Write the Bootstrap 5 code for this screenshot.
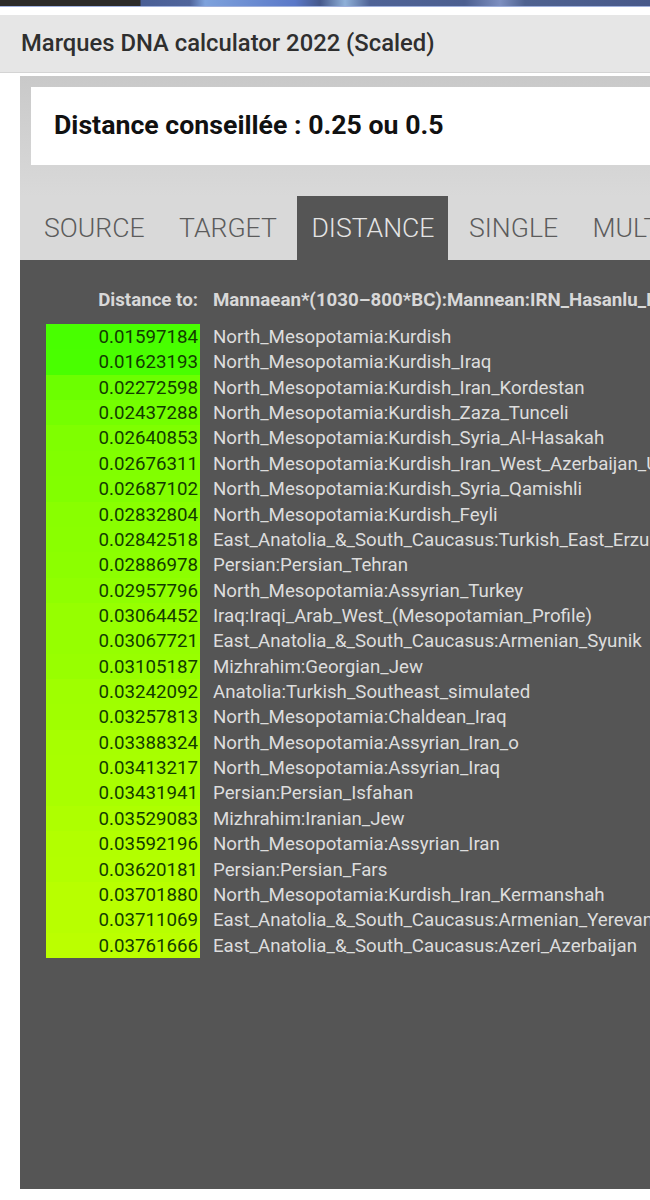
<!DOCTYPE html>
<html>
<head>
  <title>Marques DNA calculator 2022 (Scaled)</title>
  <link href="https://cdn.jsdelivr.net/npm/bootstrap@5.3.2/dist/css/bootstrap.min.css" rel="stylesheet">
  <style>
    html, body { height: 1200px; overflow: hidden; background: #fff; }
    body { font-family: Roboto, "Liberation Sans", sans-serif; }
    .top-strip { height: 7px; background: linear-gradient(90deg, #2b2a28 0, #2b2a28 140px, #4a5f95 141px, #50659c 190px, #7ea2dc 205px, #5a78c8 295px, #46598c 320px, #8fb0d8 345px, #4f6396 370px, #4c5f90 465px, #7d8fc0 500px, #4f6290 525px, #48598a 650px); border-bottom: 1px solid #9fb0dc; }
    .app-title { margin-top: 8px; height: 58px; background: #e6e6e6; border-bottom: 1px solid #d4d4d4; padding-left: 21px; font-size: 23.8px; font-weight: 500; color: #2f2f2f; line-height: 56px; white-space: nowrap; }
    .main-panel { margin: 3px 0 0 20px; height: 1113px; width: 630px; background: linear-gradient(180deg, #c9c9c9 0, #d9d9d9 120px); overflow: hidden; }
    .hint-box { margin: 11px 0 0 11px; height: 78px; background: #fff; padding-left: 23px; font-size: 26.7px; font-weight: 700; color: #111; line-height: 77px; white-space: nowrap; }
    .tab-bar { margin: 31px 0 0 10px; height: 64px; flex-wrap: nowrap; gap: 6.5px; }
    .tab-bar .nav-link { height: 64px; padding: 0 14px; font-size: 26.6px; font-weight: 300; line-height: 64px; color: #5c5c5c; border-radius: 0; white-space: nowrap; }
    .tab-bar .nav-link.active { background: #555; color: #e4e4e4; }
    .dist-pane { height: 930px; background: #555; color: #ddd; font-size: 18.7px; padding-top: 29px; white-space: nowrap; }
    .dist-head { font-size: 18.7px; font-weight: 700; color: #d8d8d8; height: 20px; line-height: 22px; margin-bottom: 15px; }
    .dist-label { width: 178px; flex: none; text-align: right; }
    .dist-head .dist-name { margin-left: 15px; }
    .dist-name { margin-left: 13px; }
    .dist-rows { margin-left: 26px; }
    .dist-row { height: 25.36px; line-height: 27px; }
    .dist-val { width: 154px; flex: none; text-align: right; padding-right: 2px; color: #123c00; }
  </style>
</head>
<body>
  <div class="top-strip"></div>
  <div class="app-title">Marques DNA calculator 2022 (Scaled)</div>

  <div class="main-panel">
    <div class="hint-box">Distance conseillée : 0.25 ou 0.5</div>

    <ul class="nav tab-bar">
      <li class="nav-item"><a class="nav-link" href="#">SOURCE</a></li>
      <li class="nav-item"><a class="nav-link" href="#">TARGET</a></li>
      <li class="nav-item"><a class="nav-link active" href="#">DISTANCE</a></li>
      <li class="nav-item"><a class="nav-link" href="#">SINGLE</a></li>
      <li class="nav-item"><a class="nav-link" href="#">MULTI</a></li>
    </ul>

    <div class="dist-pane">
      <div class="dist-head d-flex">
        <div class="dist-label">Distance to:</div>
        <div class="dist-name">Mannaean*(1030–800*BC):Mannean:IRN_Hasanlu_IA</div>
      </div>
      <div class="dist-rows" id="rows"></div>
    </div>
  </div>

  <script>
    const data = [
      ["0.01597184", "North_Mesopotamia:Kurdish"],
      ["0.01623193", "North_Mesopotamia:Kurdish_Iraq"],
      ["0.02272598", "North_Mesopotamia:Kurdish_Iran_Kordestan"],
      ["0.02437288", "North_Mesopotamia:Kurdish_Zaza_Tunceli"],
      ["0.02640853", "North_Mesopotamia:Kurdish_Syria_Al-Hasakah"],
      ["0.02676311", "North_Mesopotamia:Kurdish_Iran_West_Azerbaijan_Urmia"],
      ["0.02687102", "North_Mesopotamia:Kurdish_Syria_Qamishli"],
      ["0.02832804", "North_Mesopotamia:Kurdish_Feyli"],
      ["0.02842518", "East_Anatolia_&_South_Caucasus:Turkish_East_Erzurum"],
      ["0.02886978", "Persian:Persian_Tehran"],
      ["0.02957796", "North_Mesopotamia:Assyrian_Turkey"],
      ["0.03064452", "Iraq:Iraqi_Arab_West_(Mesopotamian_Profile)"],
      ["0.03067721", "East_Anatolia_&_South_Caucasus:Armenian_Syunik"],
      ["0.03105187", "Mizhrahim:Georgian_Jew"],
      ["0.03242092", "Anatolia:Turkish_Southeast_simulated"],
      ["0.03257813", "North_Mesopotamia:Chaldean_Iraq"],
      ["0.03388324", "North_Mesopotamia:Assyrian_Iran_o"],
      ["0.03413217", "North_Mesopotamia:Assyrian_Iraq"],
      ["0.03431941", "Persian:Persian_Isfahan"],
      ["0.03529083", "Mizhrahim:Iranian_Jew"],
      ["0.03592196", "North_Mesopotamia:Assyrian_Iran"],
      ["0.03620181", "Persian:Persian_Fars"],
      ["0.03701880", "North_Mesopotamia:Kurdish_Iran_Kermanshah"],
      ["0.03711069", "East_Anatolia_&_South_Caucasus:Armenian_Yerevan"],
      ["0.03761666", "East_Anatolia_&_South_Caucasus:Azeri_Azerbaijan"]
    ];

    const rows = document.getElementById("rows");
    data.forEach(function (item) {
      const row = document.createElement("div");
      row.className = "dist-row d-flex";
      const val = document.createElement("div");
      val.className = "dist-val";
      val.textContent = item[0];
      // colour runs from green to yellow-green with the distance
      const red = Math.round(72 + (parseFloat(item[0]) - 0.01597) * 5300);
      val.style.backgroundColor = "rgb(" + red + ",255,0)";
      const name = document.createElement("div");
      name.className = "dist-name";
      name.textContent = item[1];
      row.appendChild(val);
      row.appendChild(name);
      rows.appendChild(row);
    });
  </script>
  <script src="https://cdn.jsdelivr.net/npm/bootstrap@5.3.2/dist/js/bootstrap.bundle.min.js"></script>
</body>
</html>
